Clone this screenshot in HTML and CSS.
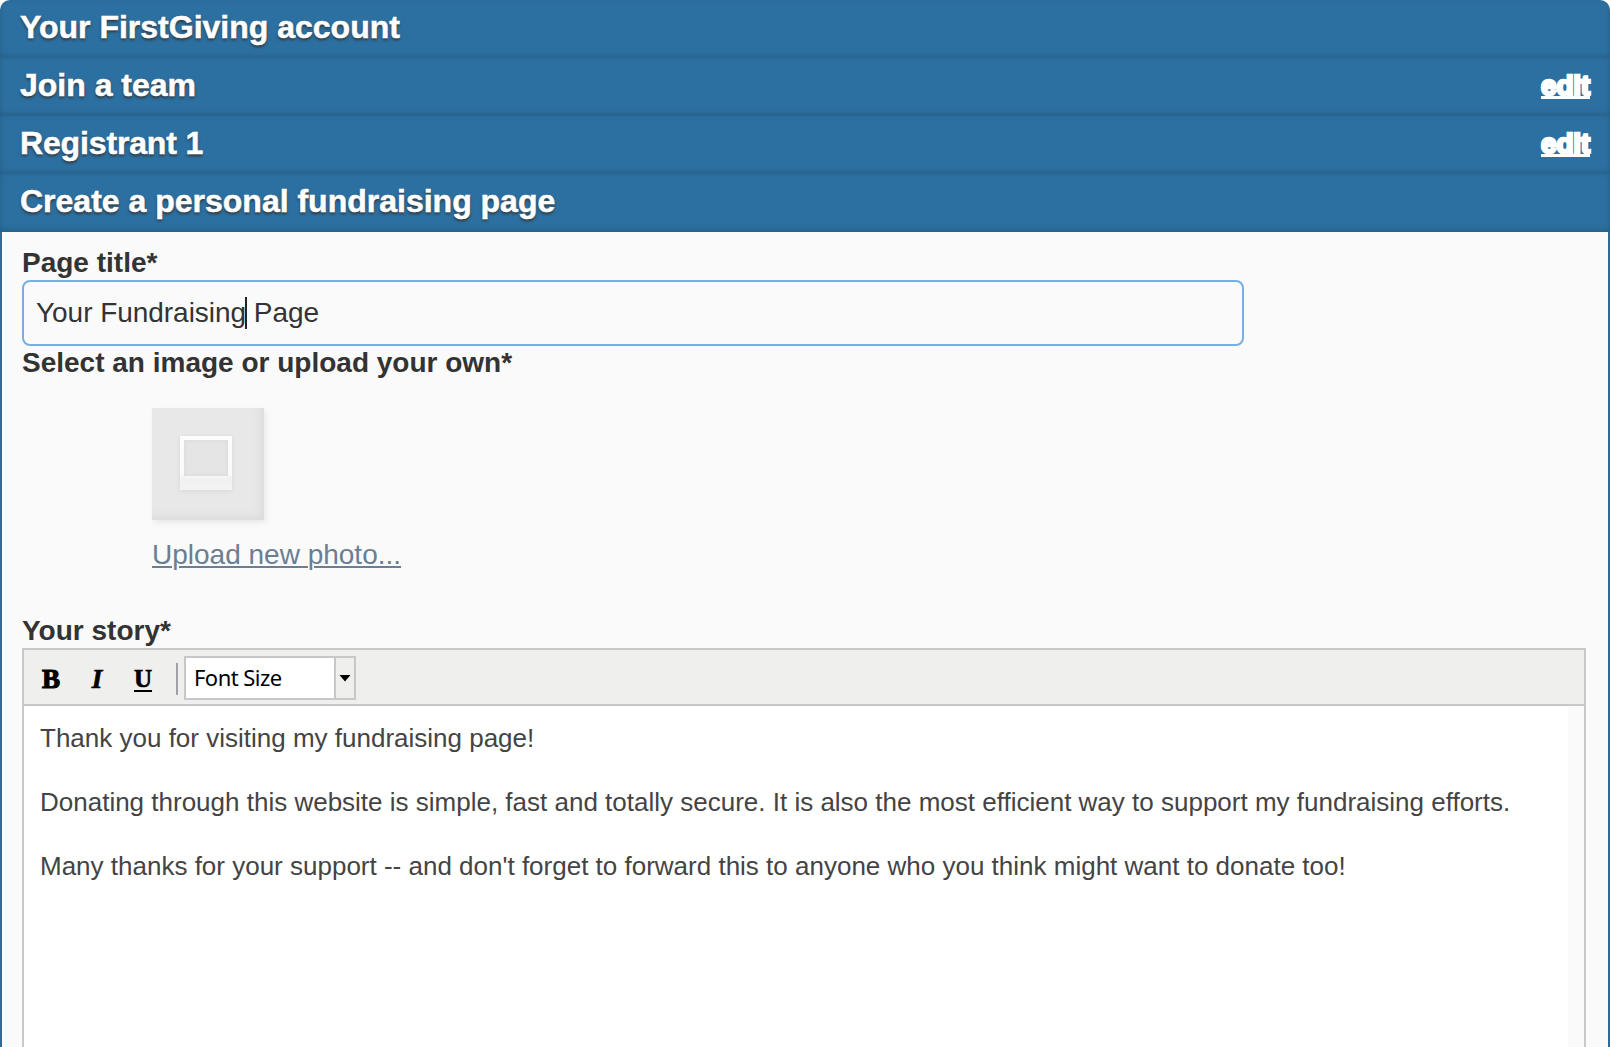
FILE: index.html
```html
<!DOCTYPE html>
<html lang="en">
<head>
    <meta charset="UTF-8">
    <meta name="viewport" content="width=device-width, initial-scale=1.0">
    <title>Create a personal fundraising page</title>
    <link rel="stylesheet" href="styles.css">
</head>
<body>
    <div class="steps">
        <div class="step-header">
            <h2>Your FirstGiving account</h2>
        </div>
        <div class="step-header">
            <h2>Join a team</h2>
            <a href="#" class="edit">edit</a>
        </div>
        <div class="step-header">
            <h2 class="registrant">Registrant 1</h2>
            <a href="#" class="edit">edit</a>
        </div>
        <div class="step-header">
            <h2>Create a personal fundraising page</h2>
        </div>

        <div class="step-body">
            <div class="label title-label">Page title*</div>
            <div class="title-input"><span>Your Fundraising</span><i class="caret"></i><span>&nbsp;Page</span></div>
            <div class="label image-label">Select an image or upload your own*</div>

            <div class="photo">
                <div class="thumb">
                    <div class="polaroid"><div class="polaroid-hole"></div></div>
                </div>
                <a href="#" class="upload">Upload new photo...</a>
            </div>

            <div class="label story-label">Your story*</div>
            <div class="editor">
                <div class="toolbar">
                    <span class="tool bold">B</span>
                    <span class="tool italic">I</span>
                    <span class="tool underline">U</span>
                    <span class="separator"></span>
                    <div class="font-size">
                        <span class="font-size-text">Font Size</span>
                        <span class="font-size-arrow">
                            <svg width="12" height="8" viewBox="0 0 12 8"><path d="M0.5 1H11.5L6 7.5Z" fill="#000"/></svg>
                        </span>
                    </div>
                </div>
                <div class="story">
                    <div class="story-text">
                        <p>Thank you for visiting my fundraising page!</p>
                        <p>Donating through this website is simple, fast and totally secure. It is also the most efficient way to support my fundraising efforts.</p>
                        <p>Many thanks for your support -- and don't forget to forward this to anyone who you think might want to donate too!</p>
                    </div>
                </div>
            </div>
        </div>
    </div>
</body>
</html>
```
FILE: styles.css
```css
* { box-sizing: border-box; }
body {
    font-family: "Liberation Sans", Arial, sans-serif;
    background: #fff;
    color: #333;
    margin: 0;
    height: 1047px;
    overflow: hidden;
}
.steps {
    height: 1047px;
    display: flex;
    flex-direction: column;
    border-radius: 10px 10px 0 0;
    overflow: hidden;
}
.step-header {
    height: 58px;
    flex: none;
    display: flex;
    justify-content: space-between;
    padding: 9px 20px 0;
    background: #2c70a1;
    box-shadow: inset 0 -2px 6px rgba(0, 0, 0, 0.16);
    color: #fff;
    line-height: 36px;
}
.step-header h2 {
    margin: 0;
    font-size: 32px;
    line-height: 36px;
    white-space: nowrap;
    text-shadow: 0 2px 3px #333;
    -webkit-text-stroke: 0.5px #fff;
}
.step-header .registrant { letter-spacing: -0.15px; }
.edit {
    color: #fff;
    font-size: 28px;
    font-weight: bold;
    line-height: 38px;
    letter-spacing: -0.2px;
    -webkit-text-stroke: 2.6px #fff;
    text-decoration-skip-ink: none;
    text-decoration-thickness: 3px;
    text-underline-offset: 1px;
}
.step-body {
    flex: 1;
    display: flex;
    flex-direction: column;
    padding: 14px 22px 0 20px;
    background: #fafafa;
    border: 2px solid #2b6a9a;
    border-top: none;
    border-bottom: none;
}
.label {
    height: 34px;
    font-size: 28px;
    font-weight: bold;
    line-height: 34px;
    white-space: nowrap;
}
.title-input {
    width: 1222px;
    height: 66px;
    display: flex;
    align-items: center;
    padding: 0 12px;
    border: 2px solid #76b0e2;
    border-radius: 8px;
    font-size: 28px;
    line-height: 32px;
    letter-spacing: -0.04px;
}
.caret {
    width: 2px;
    height: 32px;
    margin: 0 -1px 0 -1px;
    background: #222;
}
.photo {
    display: flex;
    flex-direction: column;
    align-items: flex-start;
    padding: 28px 0 0 130px;
    height: 234px;
}
.thumb {
    width: 112px;
    height: 112px;
    padding: 28px;
    background: #e8e8e8;
    box-shadow: inset -5px -5px 9px -2px #dadada, 2px 3px 6px rgba(0, 0, 0, 0.07);
}
.polaroid {
    width: 52px;
    height: 54px;
    padding: 4px;
    background: linear-gradient(#fcfcfc, #fafafa 70%, #f1f1f1 80%, #f3f3f3);
    box-shadow: 0 1px 5px rgba(0, 0, 0, 0.08);
}
.polaroid-hole {
    width: 44px;
    height: 36px;
    background: #e5e5e5;
    box-shadow: inset 0 0 4px #d8d8d8;
}
.upload {
    margin-top: 19px;
    color: #6a7f92;
    font-size: 28px;
    line-height: 32px;
    text-decoration-thickness: 2px;
    text-underline-offset: 2px;
}
.editor {
    flex: 1;
    display: flex;
    flex-direction: column;
    border: 2px solid #c8c8c8;
    border-bottom: none;
}
.toolbar {
    height: 56px;
    display: flex;
    align-items: center;
    padding: 2px 0 0 4px;
    background: #efefee;
    border-bottom: 2px solid #c8c8c8;
}
.tool {
    width: 46px;
    margin-top: 2px;
    color: #000;
    text-align: center;
    font-family: "Liberation Serif", "Times New Roman", serif;
    font-size: 27px;
    font-weight: bold;
    line-height: 30px;
    -webkit-text-stroke: 0.7px #000;
}
.bold { -webkit-text-stroke-width: 1.2px; }
.italic { font-style: italic; }
.underline {
    font-size: 25px;
    text-decoration: underline;
    text-decoration-thickness: 2px;
    text-underline-offset: 3px;
}
.separator {
    width: 2px;
    height: 32px;
    margin: 2px 6px 0 10px;
    background: #a0a0a6;
}
.font-size {
    width: 172px;
    height: 44px;
    display: flex;
    background: #fff;
    border: 2px solid #c8c8c8;
}
.font-size-text {
    flex: 1;
    padding-left: 8px;
    color: #000;
    font-family: "Noto Sans", Tahoma, sans-serif;
    font-size: 22px;
    line-height: 39px;
    letter-spacing: -0.55px;
}
.font-size-arrow {
    width: 20px;
    display: flex;
    align-items: center;
    justify-content: center;
    background: #efefee;
    border-left: 2px solid #c8c8c8;
}
.story {
    flex: 1;
    padding-right: 16px;
}
.story-text {
    height: 100%;
    padding: 16px;
    background: #fff;
    color: #444;
    font-size: 26px;
    line-height: 32px;
}
.story-text p {
    margin: 0 0 32px;
    white-space: nowrap;
}
```
